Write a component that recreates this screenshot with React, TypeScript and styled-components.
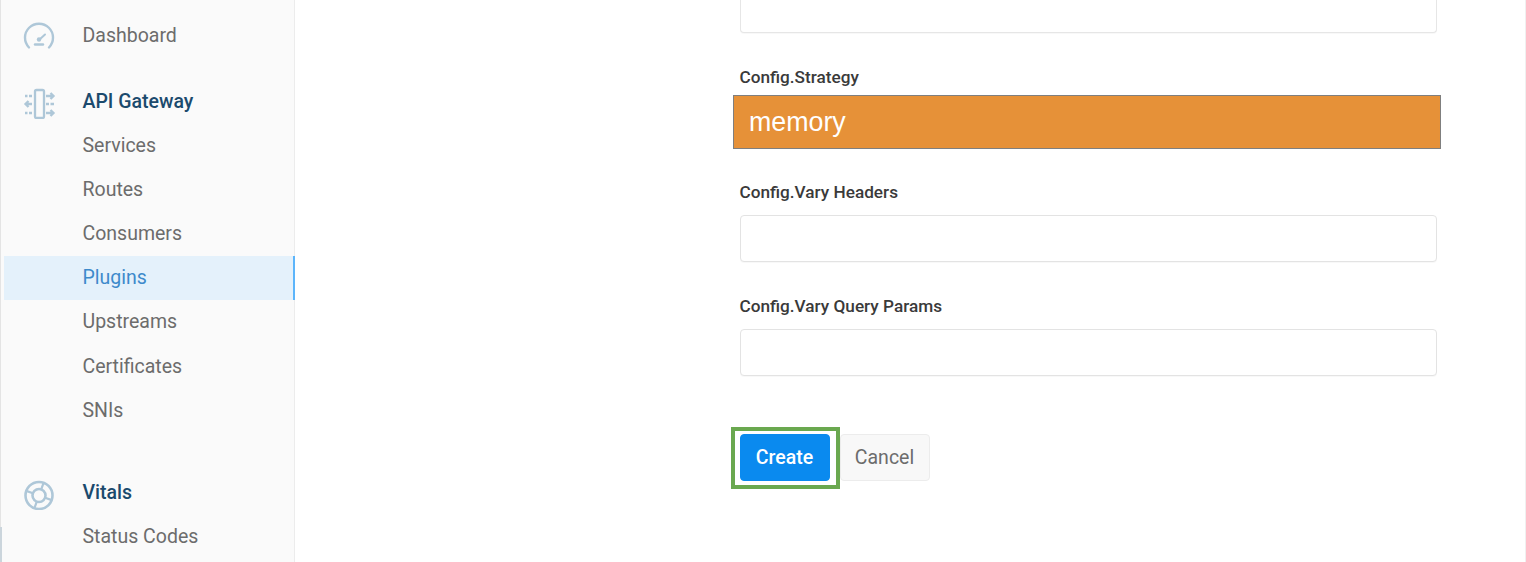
import React from 'react';
import styled, { createGlobalStyle } from 'styled-components';

const GlobalStyle = createGlobalStyle`
  html, body {
    margin: 0;
    padding: 0;
    height: 100%;
    overflow: hidden;
    background: #fff;
    font-family: Roboto, "Liberation Sans", sans-serif;
  }
`;

const Page = styled.div`
  display: flex;
  width: 1526px;
  height: 562px;
  overflow: hidden;
  box-sizing: border-box;
  border-right: 1px solid #f0f0f0;
`;

const Sidebar = styled.nav`
  position: relative;
  flex: 0 0 295px;
  box-sizing: border-box;
  padding: 14px 0 0 3px;
  background: #fafafa;
  border-left: 1px solid #e4e4e4;
  border-right: 1px solid #ececec;

  /* darker scroll edge at the bottom left */
  &::before {
    content: '';
    position: absolute;
    left: -1px;
    top: 527px;
    bottom: 0;
    width: 2px;
    background: #cbd5dc;
  }
`;

const Group = styled.div<{ $gap?: number }>`
  margin-bottom: ${({ $gap }) => $gap ?? 0}px;
`;

const Item = styled.div<{ $active?: boolean; $title?: boolean }>`
  display: flex;
  align-items: center;
  box-sizing: border-box;
  height: 44.15px;
  margin-right: -1px;
  padding: 0 0 1px 78.5px;
  font-size: 19.5px;
  position: relative;
  font-weight: ${({ $title }) => ($title ? 500 : 400)};
  color: ${({ $active, $title }) => ($active ? '#3d8acb' : $title ? '#1b4a6d' : '#6c6c6c')};
  background: ${({ $active }) => ($active ? '#e4f1fb' : 'transparent')};
  border-right: 2px solid ${({ $active }) => ($active ? '#5cb5fb' : 'transparent')};
`;

const IconSlot = styled.span`
  position: absolute;
  left: 18px;
  top: 5px;
  width: 34px;
  height: 34px;
  color: #aec7d8;

  svg {
    display: block;
  }
`;

const Main = styled.main`
  flex: 1;
  box-sizing: border-box;
  padding: 0 88px 0 444.5px;
`;

const TopInput = styled.div`
  box-sizing: border-box;
  height: 34px;
  margin-top: -1px;
  background: #fff;
  border: 1px solid #e6e6e6;
  border-top: 0;
  border-radius: 0 0 4px 4px;
  box-shadow: 0 1px 1px rgba(0, 0, 0, 0.03);
`;

const Field = styled.div<{ $gap: number }>`
  margin-top: ${({ $gap }) => $gap}px;
`;

const Label = styled.label`
  display: block;
  height: 20px;
  line-height: 18px;
  margin-bottom: 12px;
  font-size: 17.2px;
  font-weight: 500;
  color: #3a3a3a;
`;

const TextInput = styled.div`
  box-sizing: border-box;
  height: 47px;
  background: #fff;
  border: 1px solid #e3e3e3;
  border-radius: 4px;
  box-shadow: 0 1px 1px rgba(0, 0, 0, 0.03);
`;

const StrategyLabel = styled(Label)`
  margin-bottom: 7px;
`;

const HighlightedValue = styled.div`
  box-sizing: border-box;
  display: flex;
  align-items: center;
  height: 54px;
  margin: 0 -4px 0 -6.5px;
  padding: 1px 0 0 15px;
  background: #e69138;
  border: 1px solid #7f7f7f;
  font-family: "Liberation Sans", Arial, sans-serif;
  font-size: 26.8px;
  color: #fff;
`;

const Actions = styled.div`
  display: flex;
  margin-top: 58px;
`;

const CreateWrap = styled.span`
  position: relative;
  display: flex;
  margin-right: 10px;

  &::after {
    content: '';
    position: absolute;
    left: -9px;
    right: -10px;
    top: -7px;
    bottom: -8px;
    border: 4px solid #6aa84f;
    pointer-events: none;
  }
`;

const Button = styled.button<{ $primary?: boolean }>`
  box-sizing: border-box;
  width: 90px;
  height: 47px;
  padding: 0;
  border-radius: 4px;
  font-family: inherit;
  font-size: 19.5px;
  font-weight: ${({ $primary }) => ($primary ? 500 : 400)};
  color: ${({ $primary }) => ($primary ? '#fff' : '#6c6c6c')};
  background: ${({ $primary }) => ($primary ? '#0a8aef' : '#f8f8f8')};
  border: 1px solid ${({ $primary }) => ($primary ? '#0a8aef' : '#ececec')};
`;

const GaugeIcon = () => (
  <svg width="34" height="34" viewBox="0 0 34 34" fill="none" stroke="currentColor" strokeLinecap="round">
    <path d="M7 28.500A14 14 0 1 1 27 28.500" strokeWidth="2.400" />
    <path d="M17 21L23 15.500" strokeWidth="2" />
    <circle cx="17" cy="20.500" r="2.200" fill="currentColor" stroke="none" />
    <path d="M13 25.500H21" strokeWidth="2.400" />
  </svg>
);

const GatewayIcon = () => (
  <svg width="34" height="34" viewBox="0 0 34 34" fill="none" stroke="currentColor" strokeWidth="2.300">
    <rect x="13" y="5" width="9" height="28" rx="1.500" />
    <path d="M3 11h2.500M7 11h3M24 19h3M28.500 19h3.500M3 28h2.500M7 28h3" />
    <path d="M24 11h7.500M28.500 8l3 3-3 3" />
    <path d="M3.500 19h6.500M6.500 16l-3 3 3 3" />
    <path d="M24 28h7.500M28.500 25l3 3-3 3" />
  </svg>
);

const VitalsIcon = () => (
  <svg width="34" height="34" viewBox="0 0 34 34" fill="none" stroke="currentColor" strokeWidth="2.600">
    <circle cx="17" cy="19.500" r="13.500" />
    <circle cx="17" cy="19.500" r="6.500" />
    <path d="M19.200 13.400L21.600 6.800M23.100 21.700L29.700 24.100M14.800 25.600L12.400 32.200M10.900 17.300L4.300 14.900" strokeWidth="2.200" />
  </svg>
);

const gatewayLinks = ['Services', 'Routes', 'Consumers', 'Plugins', 'Upstreams', 'Certificates', 'SNIs'];

export default function App() {
  return (
    <Page>
      <GlobalStyle />
      <Sidebar>
        <Group $gap={21.5}>
          <Item>
            <IconSlot><GaugeIcon /></IconSlot>
            Dashboard
          </Item>
        </Group>
        <Group $gap={38.5}>
          <Item $title>
            <IconSlot><GatewayIcon /></IconSlot>
            API Gateway
          </Item>
          {gatewayLinks.map((link) => (
            <Item key={link} $active={link === 'Plugins'}>{link}</Item>
          ))}
        </Group>
        <Group>
          <Item $title>
            <IconSlot><VitalsIcon /></IconSlot>
            Vitals
          </Item>
          <Item>Status Codes</Item>
        </Group>
      </Sidebar>
      <Main>
        <TopInput />
        <Field $gap={35}>
          <StrategyLabel>Config.Strategy</StrategyLabel>
          <HighlightedValue>memory</HighlightedValue>
        </Field>
        <Field $gap={34}>
          <Label>Config.Vary Headers</Label>
          <TextInput />
        </Field>
        <Field $gap={35}>
          <Label>Config.Vary Query Params</Label>
          <TextInput />
        </Field>
        <Actions>
          <CreateWrap>
            <Button $primary>Create</Button>
          </CreateWrap>
          <Button>Cancel</Button>
        </Actions>
      </Main>
    </Page>
  );
}
